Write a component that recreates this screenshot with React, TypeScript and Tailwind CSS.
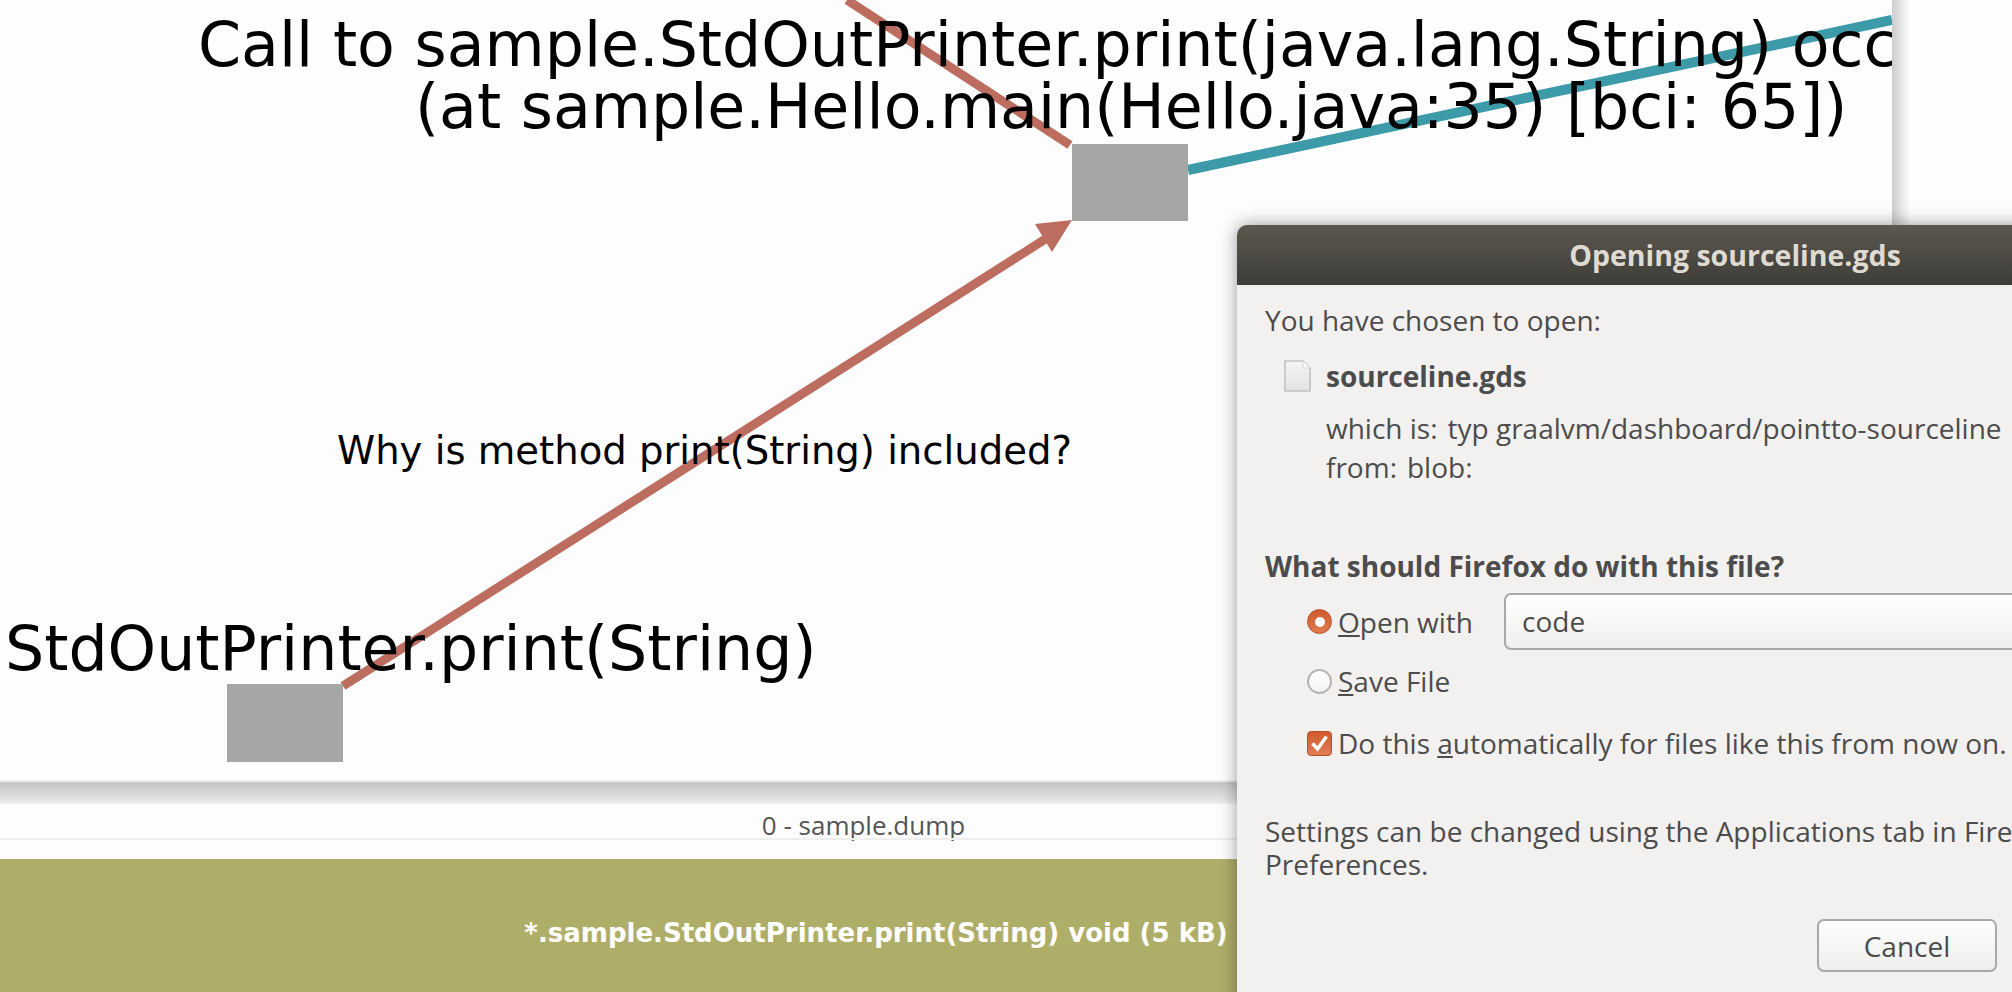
import React from 'react';

const dialogFont = "font-['Open_Sans',sans-serif]";
const graphFont = "font-['DejaVu_Sans',sans-serif]";

const GraphEdges = () => (
  <svg className="absolute inset-0" width="1892" height="780" viewBox="0 0 1892 780">
    <line x1="847" y1="0" x2="1070" y2="145" stroke="#bd6d5f" strokeWidth="9" />
    <line x1="343" y1="686" x2="1047" y2="238" stroke="#bd6d5f" strokeWidth="9" />
    <polygon points="1072,220 1035,224 1052,252" fill="#bd6d5f" />
    <line x1="1188" y1="170" x2="1892" y2="20" stroke="#3c9aa9" strokeWidth="10" />
  </svg>
);

const FileIcon = () => (
  <svg width="27" height="32" viewBox="0 0 27 32" className="shrink-0">
    <defs>
      <linearGradient id="page" x1="0" y1="0" x2="0" y2="1">
        <stop offset="0" stopColor="#f6f6f5" />
        <stop offset="1" stopColor="#e2e2e0" />
      </linearGradient>
    </defs>
    <path d="M1 1 H19 L26 8 V31 H1 Z" fill="url(#page)" stroke="#c2c2c0" strokeWidth="1.6" />
    <path d="M19 1 V8 H26" fill="#fbfbfa" stroke="#d4d4d2" strokeWidth="1" />
  </svg>
);

const Radio = ({ on }: { on?: boolean }) =>
  on ? (
    <span className="flex h-[25px] w-[25px] shrink-0 items-center justify-center rounded-full border border-[#b4532a] bg-gradient-to-b from-[#cf5a2c] to-[#e07a50]">
      <span className="h-[10px] w-[10px] rounded-full bg-white" />
    </span>
  ) : (
    <span className="h-[25px] w-[25px] shrink-0 rounded-full border-2 border-[#b4b4b2] bg-gradient-to-b from-white to-[#f4f3f2]" />
  );

const Check = () => (
  <span className="flex h-[25px] w-[25px] shrink-0 items-center justify-center rounded-[4px] border border-[#b4532a] bg-gradient-to-b from-[#cf5a2c] to-[#e27c54]">
    <svg width="19" height="18" viewBox="0 0 19 18">
      <path d="M2.5 9.5 L7.5 15 L16.5 2.5" fill="none" stroke="#fff" strokeWidth="3.4" />
    </svg>
  </span>
);

const SaveDialog = () => (
  <div className={`absolute left-[1237px] top-[225px] h-[820px] w-[996px] rounded-t-[10px] bg-[#f2f1f0] text-[28px] leading-[34px] text-[#4c4c4c] shadow-[0_0_18px_rgba(0,0,0,0.4)] ${dialogFont}`}>
    <div className="flex h-[60px] items-center justify-center rounded-t-[10px] bg-gradient-to-b from-[#5b584f] to-[#3e3d38] text-[28.5px] font-bold text-[#dfdbd2]">
      Opening sourceline.gds
    </div>
    <div className="pl-7 pt-[18px]">
      <div>You have chosen to open:</div>
      <div className="mt-[22px] flex items-center gap-[15px] pl-[19px]">
        <FileIcon />
        <span className="font-bold">sourceline.gds</span>
      </div>
      <div className="mt-[18px] flex gap-[10px] pl-[61px]">
        <span>which is:</span>
        <span className="whitespace-nowrap">typ graalvm/dashboard/pointto-sourceline</span>
      </div>
      <div className="mt-[5px] flex gap-[10px] pl-[61px]">
        <span>from:</span>
        <span>blob:</span>
      </div>
      <div className="mt-[65px] font-bold">What should Firefox do with this file?</div>
      <div className="mt-[10px] flex items-center gap-[6px] pl-[42px]">
        <Radio on />
        <span className="w-[160px]"><span className="underline">O</span>pen with</span>
        <div className="flex h-[57px] w-[600px] items-center rounded-[7px] border-2 border-[#a8a8a6] bg-gradient-to-b from-white to-[#f0efee] pb-[2px] pl-[16px]">
          code
        </div>
      </div>
      <div className="mt-[14px] flex items-center gap-[6px] pl-[42px]">
        <Radio />
        <span><span className="underline">S</span>ave File</span>
      </div>
      <div className="mt-[28px] flex items-center gap-[6px] pl-[42px]">
        <Check />
        <span className="whitespace-nowrap">Do this <span className="underline">a</span>utomatically for files like this from now on.</span>
      </div>
      <div className="mt-[54px] whitespace-nowrap">Settings can be changed using the Applications tab in Firefox's</div>
      <div className="-mt-[1px]">Preferences.</div>
    </div>
    <div className="absolute left-[580px] top-[694px] flex h-[53px] w-[180px] items-center justify-center rounded-[7px] border-2 border-[#a8a8a6] bg-gradient-to-b from-white to-[#eeedec]">
      Cancel
    </div>
  </div>
);

export default function App() {
  return (
    <div className="relative flex h-[992px] w-[2012px] flex-col overflow-hidden bg-[#fdfdfd]">
      <div className={`relative h-[780px] w-[1892px] shrink-0 overflow-hidden text-black ${graphFont}`}>
        <GraphEdges />
        <div className="absolute left-[1072px] top-[144px] h-[77px] w-[116px] bg-[#a5a7a5]" />
        <div className="absolute left-[227px] top-[684px] h-[78px] w-[116px] bg-[#a5a7a5]" />
        <div className="absolute left-[198px] top-[9px] whitespace-nowrap text-[61.75px] leading-[72px]">
          Call to sample.StdOutPrinter.print(java.lang.String) occurred
        </div>
        <div className="absolute left-[415px] top-[71px] whitespace-nowrap text-[61.75px] leading-[72px]">
          (at sample.Hello.main(Hello.java:35) [bci: 65])
        </div>
        <div className="absolute left-[337px] top-[427px] whitespace-nowrap text-[38.6px] leading-[48px]">
          Why is method print(String) included?
        </div>
        <div className="absolute left-[5px] top-[613px] whitespace-nowrap text-[61.75px] leading-[72px]">
          StdOutPrinter.print(String)
        </div>
      </div>
      <div className="absolute left-[1892px] top-0 h-[226px] w-[18px] bg-gradient-to-r from-[#cccccc] to-[#fdfdfd]" />
      <div className="h-[24px] shrink-0 border-y-2 border-[#eeeeee] bg-gradient-to-b from-[#c4c4c4] to-[#e8e8e8]" />
      <div className="flex h-[34px] shrink-0 items-center justify-center pr-[285px] pt-[8px] font-['Open_Sans',sans-serif] text-[26px] leading-none text-[#555]">
        0 - sample.dump
      </div>
      <div className="h-[21px] shrink-0 border-t-2 border-[#eeeeee]" />
      <div className={`flex flex-1 items-center justify-center bg-[#afae69] pr-[260px] pt-[15px] text-[26px] font-bold text-white ${graphFont}`}>
        *.sample.StdOutPrinter.print(String) void (5 kB)
      </div>
      <SaveDialog />
    </div>
  );
}
